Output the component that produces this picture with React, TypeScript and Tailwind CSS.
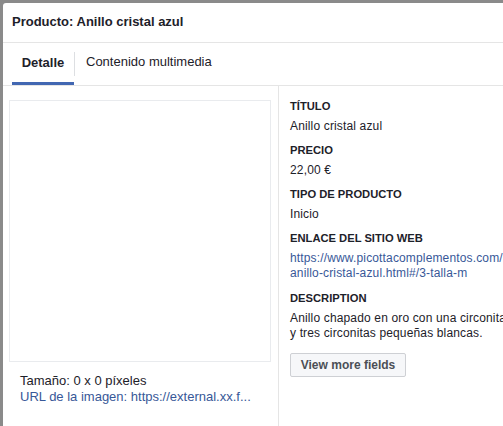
const fields = [
  { label: 'TÍTULO', lines: ['Anillo cristal azul'] },
  { label: 'PRECIO', lines: ['22,00 €'] },
  { label: 'TIPO DE PRODUCTO', lines: ['Inicio'] },
  {
    label: 'ENLACE DEL SITIO WEB',
    lines: ['https://www.picottacomplementos.com/', 'anillo-cristal-azul.html#/3-talla-m'],
    link: true,
  },
  {
    label: 'DESCRIPTION',
    lines: ['Anillo chapado en oro con una circonita azul', 'y tres circonitas pequeñas blancas.'],
  },
]

export default function App() {
  return (
    <div
      className="h-[426px] overflow-hidden bg-[#8a8a8a] pt-[3px] pl-[3px] text-[#1d2129]"
      style={{ fontFamily: '"Liberation Sans", Arial, sans-serif' }}
    >
      <div className="flex h-full w-[660px] flex-col rounded-tl-[3px] bg-white">
        <div className="flex h-[40px] shrink-0 items-center border-b border-[#e5e5e5] pb-[2px] pl-[9px]">
          <h1 className="text-[13px] font-bold leading-[18px]">Producto: Anillo cristal azul</h1>
        </div>

        <div className="flex h-[43px] shrink-0 items-stretch border-b border-[#e5e5e5] pl-[9px]">
          <div className="flex w-[62px] items-center justify-center border-b-[3px] border-[#4267b2] text-[13px] font-bold">
            Detalle
          </div>
          <div className="my-[9px] w-px bg-[#dddfe2]" />
          <div className="flex items-center pl-[11px] pb-[4px] text-[13px]">Contenido multimedia</div>
        </div>

        <div className="flex flex-1">
          <div className="w-[276px] shrink-0 border-r border-[#e5e5e5] pl-[6px] pt-[14px]">
            <div className="h-[262px] w-[262px] border border-[#e9ebee]" />
            <div className="mt-[11px] pl-[11px] text-[13px] leading-[16px]">
              <div>Tamaño: 0 x 0 píxeles</div>
              <div className="whitespace-nowrap text-[#385898]">URL de la imagen: https://external.xx.f...</div>
            </div>
          </div>

          <div className="flex-1 pl-[11px] pt-[12px]">
            {fields.map(f => (
              <div key={f.label} className={f.link ? 'mb-[9px]' : 'mb-[8px]'}>
                <div className="text-[11.2px] font-bold leading-[16px]">{f.label}</div>
                <div
                  className={
                    'mt-[5px] text-[12px] leading-[15px] tracking-[0.15px] ' + (f.link ? 'text-[#385898]' : '')
                  }
                >
                  {f.lines.map(l => (
                    <div key={l} className="whitespace-nowrap">
                      {l}
                    </div>
                  ))}
                </div>
              </div>
            ))}
            <button className="mt-[4px] h-[24px] w-[116px] rounded-[2px] border border-[#ced0d4] bg-[#f6f7f9] text-[12px] font-bold text-[#4b4f56]">
              View more fields
            </button>
          </div>
        </div>
      </div>
    </div>
  )
}
